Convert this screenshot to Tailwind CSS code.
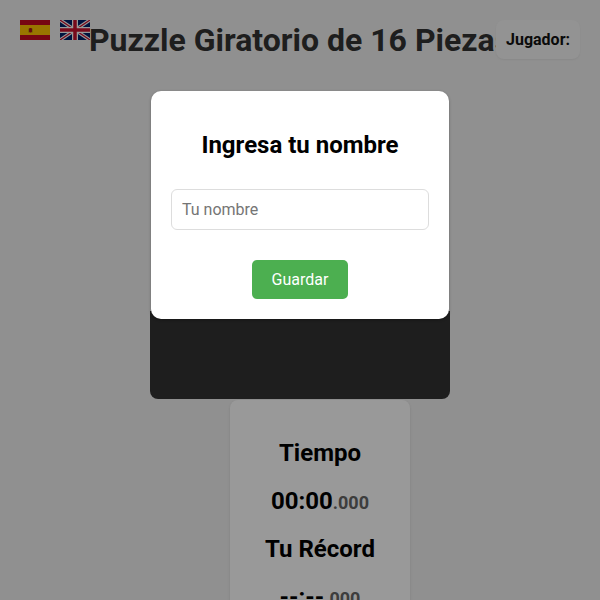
<!DOCTYPE html>
<html lang="es">
<head>
    <meta charset="UTF-8">
    <meta name="viewport" content="width=device-width, initial-scale=1.0">
    <title>Puzzle Giratorio de 16 Piezas</title>
    <script src="https://cdn.jsdelivr.net/npm/@tailwindcss/browser@4"></script>
</head>
<body class="relative h-[600px] overflow-hidden bg-[#f0f0f0] font-['Roboto',sans-serif]">

    <!-- Language flags -->
    <div class="absolute left-5 top-5 flex gap-2.5">
        <svg class="block h-5 w-[30px]" viewBox="0 0 30 20">
            <rect width="30" height="20" fill="#c60b1e"/>
            <rect y="5" width="30" height="10" fill="#ffc400"/>
            <rect x="9" y="8" width="3" height="4.5" rx="1" fill="#ad1519"/>
            <rect x="8" y="8.5" width="1" height="4" fill="#c8b100"/>
            <rect x="12" y="8.5" width="1" height="4" fill="#c8b100"/>
        </svg>
        <svg class="block h-5 w-[30px]" viewBox="0 0 60 40">
            <rect width="60" height="40" fill="#012169"/>
            <path d="M0 0L60 40M60 0L0 40" stroke="#fff" stroke-width="7"/>
            <path d="M0 0L60 40M60 0L0 40" stroke="#c8102e" stroke-width="2.5"/>
            <path d="M30 0V40M0 20H60" stroke="#fff" stroke-width="12"/>
            <path d="M30 0V40M0 20H60" stroke="#c8102e" stroke-width="7"/>
        </svg>
    </div>

    <main class="flex flex-col items-center pt-[21px]">
        <h1 class="whitespace-nowrap text-[32px] leading-[38px] font-bold text-[#333]">Puzzle Giratorio de 16 Piezas</h1>

        <!-- Board -->
        <div class="mt-[252px] h-[88px] w-[300px] rounded-b-lg bg-[#333]"></div>

        <!-- Timer panel -->
        <div class="ml-10 mt-px flex w-[180px] flex-col items-center rounded-lg bg-white pt-[37px] shadow-sm">
            <h2 class="text-2xl leading-[32px] font-bold text-black">Tiempo</h2>
            <p class="mt-4 text-2xl leading-[32px] font-bold text-black">00:00<span class="text-lg font-bold text-[#666]">.000</span></p>
            <h2 class="mt-4 text-2xl leading-[32px] font-bold text-black">Tu Récord</h2>
            <p class="mt-4 text-2xl leading-[32px] font-bold text-black">--:--<span class="text-lg font-bold text-[#666]">.000</span></p>
        </div>
    </main>

    <!-- Player box -->
    <div class="absolute right-5 top-5 rounded-lg bg-[#f5f5f5] px-2.5 py-2 text-base leading-[23px] font-bold text-[#111] shadow-xs">Jugador:</div>

    <!-- Overlay -->
    <div class="absolute inset-0 bg-black/40"></div>

    <!-- Name modal -->
    <div class="absolute left-[151px] top-[91px] flex h-[228px] w-[298px] flex-col items-center rounded-[10px] bg-white px-5 pt-[38px] shadow-[0_1px_3px_rgba(0,0,0,0.3)]">
        <h2 class="text-2xl leading-[32px] font-bold text-black">Ingresa tu nombre</h2>
        <input type="text" placeholder="Tu nombre" class="mt-[28px] h-[41px] w-[258px] rounded-md border border-[#ddd] px-[10px] text-base text-black placeholder:text-[#757575]">
        <button class="mt-[30px] h-[39px] w-24 rounded-[5px] bg-[#4caf50] text-base text-white">Guardar</button>
    </div>

</body>
</html>
